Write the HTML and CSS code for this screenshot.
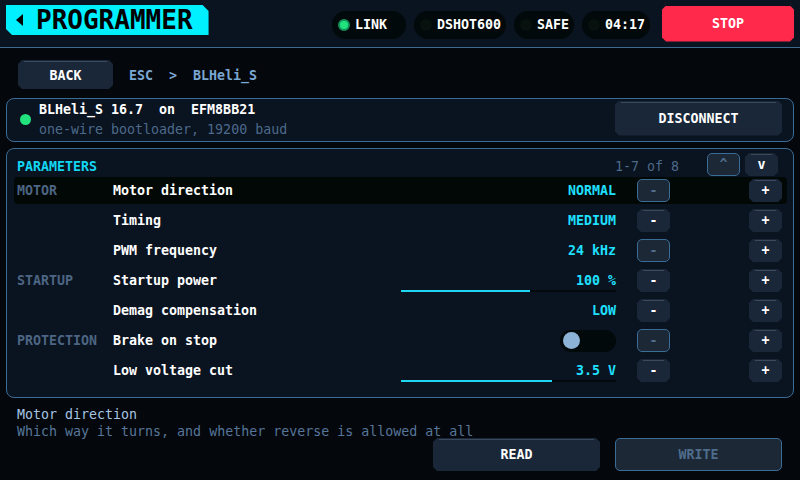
FILE: index.html
```html
<!DOCTYPE html>
<html>
<head>
  <meta charset="utf-8">
  <title>Programmer</title>
  <link rel="stylesheet" href="styles.css">
</head>
<body>
  <div class="topbar">
    <div class="title"><span class="back-arrow"></span>PROGRAMMER</div>
    <div class="status">
      <div class="pill pill-wide"><span class="dot on"></span>LINK</div>
      <div class="pill"><span class="dot"></span>DSHOT600</div>
      <div class="pill"><span class="dot"></span>SAFE</div>
      <div class="pill"><span class="dot"></span>04:17</div>
    </div>
    <button class="stop">STOP</button>
  </div>

  <div class="main">
    <div class="crumbs">
      <button class="btn back">BACK</button>
      <span class="path">ESC  &gt;  BLHeli_S</span>
    </div>

    <div class="card">
      <span class="led"></span>
      <div class="card-text">
        <div class="fw">BLHeli_S 16.7  on  EFM8BB21</div>
        <div class="sub">one-wire bootloader, 19200 baud</div>
      </div>
      <button class="btn wide">DISCONNECT</button>
    </div>

    <div class="panel">
      <div class="panel-head">
        <span class="panel-title">PARAMETERS</span>
        <span class="pager">1-7 of 8</span>
        <button class="btn off small">^</button>
        <button class="btn small">v</button>
      </div>

      <div class="row active">
        <span class="group">MOTOR</span>
        <span class="name">Motor direction</span>
        <div class="value">NORMAL</div>
        <button class="btn off step minus">-</button>
        <button class="btn step plus">+</button>
      </div>
      <div class="row">
        <span class="group"></span>
        <span class="name">Timing</span>
        <div class="value">MEDIUM</div>
        <button class="btn step minus">-</button>
        <button class="btn step plus">+</button>
      </div>
      <div class="row">
        <span class="group"></span>
        <span class="name">PWM frequency</span>
        <div class="value">24 kHz</div>
        <button class="btn off step minus">-</button>
        <button class="btn step plus">+</button>
      </div>
      <div class="row">
        <span class="group">STARTUP</span>
        <span class="name">Startup power</span>
        <div class="value slider">
          <span>100 %</span>
          <div class="track"><div class="fill" style="width: 60%"></div></div>
        </div>
        <button class="btn step minus">-</button>
        <button class="btn step plus">+</button>
      </div>
      <div class="row">
        <span class="group"></span>
        <span class="name">Demag compensation</span>
        <div class="value">LOW</div>
        <button class="btn step minus">-</button>
        <button class="btn step plus">+</button>
      </div>
      <div class="row">
        <span class="group">PROTECTION</span>
        <span class="name">Brake on stop</span>
        <div class="value"><span class="toggle"><span class="knob"></span></span></div>
        <button class="btn off step minus">-</button>
        <button class="btn step plus">+</button>
      </div>
      <div class="row">
        <span class="group"></span>
        <span class="name">Low voltage cut</span>
        <div class="value slider">
          <span>3.5 V</span>
          <div class="track"><div class="fill" style="width: 70%"></div></div>
        </div>
        <button class="btn step minus">-</button>
        <button class="btn step plus">+</button>
      </div>
    </div>

    <div class="help">
      <div class="help-title">Motor direction</div>
      <div class="help-text">Which way it turns, and whether reverse is allowed at all</div>
    </div>
    <div class="actions">
      <button class="btn wide tall">READ</button>
      <button class="btn off wide tall">WRITE</button>
    </div>
  </div>
</body>
</html>
```

FILE: styles.css
```css
html, body {
  margin: 0;
  padding: 0;
}

body {
  width: 800px;
  height: 480px;
  overflow: hidden;
  background: #04070b;
  color: #ffffff;
  font-family: "DejaVu Sans Mono", monospace;
  font-size: 13.3px;
  font-weight: bold;
}

button {
  font-family: inherit;
  font-size: 13.3px;
  font-weight: bold;
  cursor: pointer;
}

/* top bar */
.topbar {
  height: 47px;
  border-bottom: 1px solid #3d6a8e;
  background: #0a1421;
  display: flex;
  align-items: center;
  padding: 0 6px;
}

.title {
  align-self: flex-start;
  margin-top: 5px;
  height: 30px;
  display: flex;
  align-items: center;
  padding: 0 16px 0 10px;
  background: #00f0ff;
  color: #000;
  font-size: 26px;
  clip-path: polygon(0 0, calc(100% - 6px) 0, 100% 6px, 100% 100%, 6px 100%, 0 calc(100% - 6px));
}

.back-arrow {
  width: 0;
  height: 0;
  border-top: 6px solid transparent;
  border-bottom: 6px solid transparent;
  border-right: 7px solid #000;
  margin-right: 13px;
}

.status {
  margin-left: auto;
  display: flex;
  gap: 8px;
  margin-top: 2px;
}

.pill {
  height: 28px;
  border-radius: 14px;
  background: #02090a;
  display: flex;
  align-items: center;
  padding: 0 5px 0 6px;
}

.pill-wide {
  min-width: 63px;
}

.dot {
  width: 12px;
  height: 12px;
  border-radius: 50%;
  background: #07110d;
  margin-right: 5px;
  box-sizing: border-box;
}

.dot.on {
  background: #22e27e;
  border: 2px solid #12925a;
}

.stop {
  margin-left: 12px;
  width: 132px;
  height: 36px;
  border: none;
  background: #ff2a4b;
  color: #fff;
  clip-path: polygon(4px 0, calc(100% - 4px) 0, 100% 4px, 100% calc(100% - 4px), calc(100% - 4px) 100%, 4px 100%, 0 calc(100% - 4px), 0 4px);
}

/* shared buttons */
.btn {
  position: relative;
  border: none;
  background: #1a2738;
  color: #ffffff;
  padding: 0;
  clip-path: polygon(4px 0, calc(100% - 4px) 0, 100% 4px, 100% calc(100% - 4px), calc(100% - 4px) 100%, 4px 100%, 0 calc(100% - 4px), 0 4px);
}

.btn::before {
  content: "";
  position: absolute;
  top: 1px;
  left: 6px;
  right: 6px;
  height: 1px;
  background: #3a4a5c;
}

.btn.off {
  background: #1d2836;
  border: 1px solid #3a6d96;
  border-radius: 5px;
  color: #4f6d8c;
  clip-path: none;
}

.btn.off::before {
  display: none;
}

.main {
  padding: 12px 6px 0;
}

.crumbs {
  height: 29px;
  display: flex;
  align-items: center;
  padding-left: 12px;
  margin-bottom: 9px;
}

.back {
  width: 95px;
  height: 29px;
  padding-top: 2px;
}

.path {
  margin-left: 16px;
  margin-top: 2px;
  color: #7aa6d2;
  white-space: pre;
}

/* firmware card */
.card {
  height: 44px;
  box-sizing: border-box;
  border: 1px solid #3a6d96;
  border-radius: 8px;
  background: #0a1320;
  display: flex;
  align-items: center;
  padding: 0 11px 0 13px;
  margin-bottom: 6px;
}

.led {
  width: 11px;
  height: 11px;
  border-radius: 50%;
  background: #22e27e;
  margin-right: 8px;
  margin-top: -2px;
}

.card-text {
  line-height: 20px;
}

.fw {
  white-space: pre;
}

.sub {
  color: #4c6a8a;
  font-weight: normal;
}

.wide {
  margin-left: auto;
  width: 167px;
  height: 35px;
  margin-top: -4px;
}

/* parameter panel */
.panel {
  height: 250px;
  box-sizing: border-box;
  border: 1px solid #3a6d96;
  border-radius: 8px;
  background: #0a1320;
  padding: 4px 6px 0 7px;
}

.panel-head {
  height: 23px;
  display: flex;
  align-items: center;
  padding: 0 9px 0 3px;
  margin-bottom: 1px;
}

.panel-title {
  color: #12d6f2;
  padding-top: 4px;
}

.pager {
  margin-left: auto;
  margin-right: 23px;
  padding-top: 4px;
  color: #4c6a8a;
  font-weight: normal;
}

.small {
  width: 33px;
  height: 23px;
  margin-left: 5px;
}

.row {
  height: 27px;
  display: flex;
  align-items: center;
  padding: 0 5px 0 3px;
  margin-bottom: 3px;
  border-radius: 4px;
}

.row.active {
  background: #020806;
}

.group {
  width: 96px;
  color: #4c6582;
}

.name {
  flex: 1;
}

.value {
  width: 215px;
  display: flex;
  flex-direction: column;
  align-items: flex-end;
  justify-content: center;
  color: #1fe0ff;
}

.value.slider {
  padding-top: 3px;
}

.track {
  width: 100%;
  height: 2px;
  margin-top: 2px;
  background: #03090d;
}

.fill {
  height: 100%;
  background: #1fd6f2;
}

.toggle {
  width: 56px;
  height: 22px;
  border-radius: 11px;
  background: #02090a;
  display: flex;
  align-items: center;
  padding-left: 3px;
  box-sizing: border-box;
}

.knob {
  width: 17px;
  height: 17px;
  border-radius: 50%;
  background: #8cb2d6;
}

.step {
  width: 33px;
  height: 23px;
}

.minus {
  margin-left: 21px;
}

.plus {
  margin-left: 79px;
}

/* help + actions */
.help {
  padding: 8px 0 0 11px;
  font-weight: normal;
  line-height: 17px;
}

.help-title {
  color: #a4c4e4;
}

.help-text {
  color: #56769a;
}

.actions {
  display: flex;
  justify-content: flex-end;
  gap: 15px;
  padding-right: 12px;
  margin-top: -2px;
}

.tall {
  margin-left: 0;
  margin-top: 0;
  height: 33px;
}
```
